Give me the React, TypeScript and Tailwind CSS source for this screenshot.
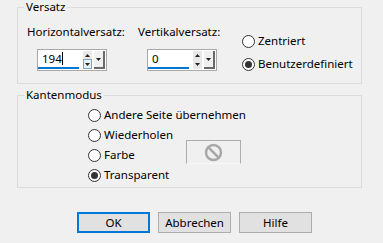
import React from 'react';

const font = { fontFamily: '"Noto Sans", "Open Sans", Arial, sans-serif' };

function Radio({ label, checked }: { label: string; checked?: boolean }) {
  return (
    <div className="flex items-center h-[16px] gap-[3px]">
      <span className="w-[13px] h-[13px] rounded-full border border-[#333] bg-white flex items-center justify-center">
        {checked && <span className="w-[7px] h-[7px] rounded-full bg-[#333]" />}
      </span>
      <span className="text-[11.5px] leading-[16px] text-black">{label}</span>
    </div>
  );
}

function Spinner({ value, focused }: { value: string; focused?: boolean }) {
  return (
    <div className="flex items-stretch w-[70px] h-[22px] border border-[#a9a9a9] bg-white">
      <div className="flex-1 flex flex-col">
        <div className="flex-1 flex items-center pl-[4px] text-[11.5px] leading-[16px] text-black">
          {value}
          {focused && <span className="w-px h-[13px] bg-black" />}
        </div>
        <div className="h-[2px] w-[41px] bg-[#0078d7] mb-px" />
      </div>
      <div className="flex flex-col w-[9px] my-px mr-[2px]">
        <div className="flex-1 flex items-center justify-center bg-[#e8e8e8]">
          <svg width="5" height="3" viewBox="0 0 5 3"><path d="M0 3 L2.5 0 L5 3 Z" fill="#222" /></svg>
        </div>
        <div className={`flex-1 flex items-center justify-center ${focused ? 'bg-[#e5f1fb] border border-[#6fa9dc]' : 'bg-[#e8e8e8]'}`}>
          <svg width="5" height="3" viewBox="0 0 5 3"><path d="M0 0 L2.5 3 L5 0 Z" fill="#222" /></svg>
        </div>
      </div>
      <div className="w-[11px] my-px mr-px flex items-center justify-center bg-[#f0f0f0] border-r-2 border-b-2 border-r-[#696969] border-b-[#696969]">
        <svg width="5" height="3" viewBox="0 0 5 3"><path d="M0 0 L2.5 3 L5 0 Z" fill="#222" /></svg>
      </div>
    </div>
  );
}

function Button({ label, primary }: { label: string; primary?: boolean }) {
  return (
    <button
      className={`h-[21px] w-[73px] bg-[#e1e1e1] text-[11.5px] leading-[16px] text-black ${
        primary ? 'border-2 border-[#0078d7]' : 'border border-[#adadad]'
      }`}
    >
      {label}
    </button>
  );
}

export default function App() {
  return (
    <div className="w-[383px] h-[243px] bg-[#f0f0f0] overflow-hidden" style={font}>
      <fieldset className="ml-[17px] w-[345px] h-[84px] border border-[#dcdcdc]">
        <legend className="ml-[6px] px-[2px] text-[11.5px] leading-[14px] text-black">Versatz</legend>
        <div className="flex pl-[9px]">
          <div className="w-[111px] flex flex-col">
            <span className="mt-[10px] text-[11.5px] leading-[15px] text-black">Horizontalversatz:</span>
            <div className="mt-[10px] ml-[10px]">
              <Spinner value="194" focused />
            </div>
          </div>
          <div className="w-[104px] flex flex-col">
            <span className="mt-[10px] text-[11.5px] leading-[15px] text-black">Vertikalversatz:</span>
            <div className="mt-[10px] ml-[9px]">
              <Spinner value="0" />
            </div>
          </div>
          <div className="flex flex-col gap-[7px] mt-[19px]">
            <Radio label="Zentriert" />
            <Radio label="Benutzerdefiniert" checked />
          </div>
        </div>
      </fieldset>

      <fieldset className="mt-[4px] ml-[17px] w-[345px] h-[100px] border border-[#dcdcdc]">
        <legend className="ml-[6px] px-[2px] text-[11.5px] leading-[14px] text-black">Kantenmodus</legend>
        <div className="flex pl-[70px] pt-[5px]">
          <div className="flex flex-col gap-[4px]">
            <Radio label="Andere Seite übernehmen" />
            <Radio label="Wiederholen" />
            <Radio label="Farbe" />
            <Radio label="Transparent" checked />
          </div>
        </div>
        <div className="flex -mt-[43px] ml-[168px]">
          <div className="w-[55px] h-[24px] border border-[#adadad] border-b-[#f8f8f8] bg-[#f0f0f0] flex items-center justify-center">
            <svg width="19" height="19" viewBox="0 0 19 19">
              <circle cx="9.5" cy="9.5" r="7.5" fill="none" stroke="#a8a8a8" strokeWidth="2.5" />
              <path d="M4.2 4.2 L14.8 14.8" stroke="#a8a8a8" strokeWidth="2.5" />
            </svg>
          </div>
        </div>
      </fieldset>

      <div className="flex gap-[8px] ml-[77px] mt-[24px]">
        <Button label="OK" primary />
        <Button label="Abbrechen" />
        <Button label="Hilfe" />
      </div>
    </div>
  );
}
